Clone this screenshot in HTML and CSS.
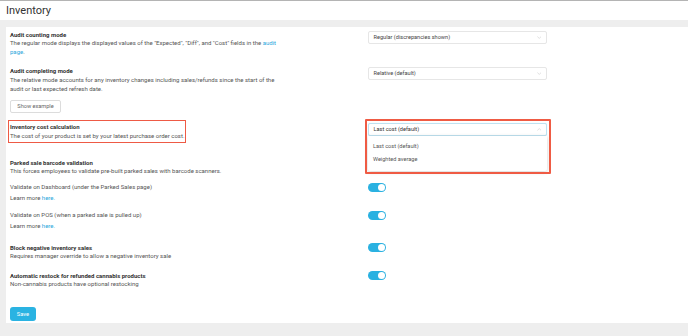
FILE: index.html
```html
<!DOCTYPE html>
<html>
<head>
<meta charset="utf-8">
<link rel="stylesheet" href="styles.css">
</head>
<body>
<header class="topbar"><h1 class="page-title">Inventory</h1></header>
<main class="main">
  <section class="card">
    <div class="row">
      <div class="info">
        <div class="title">Audit counting mode</div>
        <div class="desc">The regular mode displays the displayed values of the "Expected", "Diff", and "Cost" fields in the <a class="link">audit page</a>.</div>
      </div>
      <div class="control">
        <div class="select"><span>Regular (discrepancies shown)</span><svg class="chev" viewBox="0 0 6 4"><polyline points="0.5,0.8 3,3.2 5.5,0.8"/></svg></div>
      </div>
    </div>

    <div class="row gap">
      <div class="info">
        <div class="title">Audit completing mode</div>
        <div class="desc">The relative mode accounts for any inventory changes including sales/refunds since the start of the audit or last expected refresh date.</div>
        <button class="btn-outline">Show example</button>
      </div>
      <div class="control">
        <div class="select s2"><span>Relative (default)</span><svg class="chev" viewBox="0 0 6 4"><polyline points="0.5,0.8 3,3.2 5.5,0.8"/></svg></div>
      </div>
    </div>

    <div class="row gap">
      <div class="info">
        <div class="mark">
          <div class="title">Inventory cost calculation</div>
          <div class="desc">The cost of your product is set by your latest purchase order cost.</div>
        </div>
      </div>
      <div class="control open">
        <div class="select focus"><span>Last cost (default)</span><svg class="chev" viewBox="0 0 6 4"><polyline points="0.5,3.2 3,0.8 5.5,3.2"/></svg></div>
        <ul class="menu">
          <li>Last cost (default)</li>
          <li>Weighted average</li>
        </ul>
        <div class="mark-box"></div>
      </div>
    </div>

    <div class="row gap-lg">
      <div class="info">
        <div class="title">Parked sale barcode validation</div>
        <div class="desc">This forces employees to validate pre-built parked sales with barcode scanners.</div>
      </div>
    </div>

    <div class="row sub">
      <div class="info">
        <div class="desc">Validate on Dashboard (under the Parked Sales page)</div>
        <div class="desc more">Learn more <a class="link">here.</a></div>
      </div>
      <div class="control"><span class="toggle"></span></div>
    </div>

    <div class="row sub2">
      <div class="info">
        <div class="desc">Validate on POS (when a parked sale is pulled up)</div>
        <div class="desc more">Learn more <a class="link">here.</a></div>
      </div>
      <div class="control"><span class="toggle"></span></div>
    </div>

    <div class="row gap-md">
      <div class="info">
        <div class="title">Block negative inventory sales</div>
        <div class="desc">Requires manager override to allow a negative inventory sale</div>
      </div>
      <div class="control"><span class="toggle"></span></div>
    </div>

    <div class="row gap">
      <div class="info">
        <div class="title">Automatic restock for refunded cannabis products</div>
        <div class="desc">Non-cannabis products have optional restocking</div>
      </div>
      <div class="control"><span class="toggle"></span></div>
    </div>

    <button class="btn-save">Save</button>
  </section>
</main>
</body>
</html>
```

FILE: styles.css
```css
* { box-sizing: border-box; }
html, body { margin: 0; padding: 0; }
body {
  background: #eeeeee;
  font-family: Roboto, "Liberation Sans", sans-serif;
  color: #555;
  width: 688px;
  height: 336px;
  overflow: hidden;
}
.topbar {
  background: #fff;
  border-top: 1px solid #b4b4b4;
  height: 20px;
  padding-left: 6px;
}
.page-title {
  margin: 0;
  font-size: 11px;
  line-height: 19px;
  font-weight: 400;
  color: #333;
}
.main {
  padding: 7px 0 0 6px;
}
.card {
  background: #fff;
  height: 296px;
  padding: 2.5px 0 0 4px;
}
.row {
  display: flex;
  align-items: flex-start;
}
.row.gap { margin-top: 9.5px; }
.row.gap-lg { margin-top: 15.6px; }
.row.gap-md { margin-top: 11.8px; }
.row.sub { margin-top: 6.6px; }
.row.sub2 { margin-top: 8.2px; }
.info {
  width: 358px;
  flex: none;
}
.title {
  font-size: 6px;
  line-height: 9.7px;
  font-weight: 700;
  color: #333;
}
.desc {
  font-size: 6px;
  line-height: 8.7px;
  color: #555;
  width: 272px;
}
.desc.more { margin-top: 2.6px; }
.link { color: #2aa7dc; text-decoration: none; }
.control {
  width: 179px;
  flex: none;
  position: relative;
}
.select {
  margin-top: 1.5px;
  height: 12.5px;
  border: 1px solid #e6e6e6;
  border-radius: 2px;
  display: flex;
  align-items: center;
  justify-content: space-between;
  padding: 0 5px 0 4.5px;
  font-size: 5.6px;
  color: #444;
  background: #fff;
}
.select.s2 { margin-top: 1px; }
.select.focus {
  margin-top: 0.8px;
  border-color: #bfe2f1;
  box-shadow: 0 0 1px rgba(42, 167, 220, 0.25);
  color: #333;
}
.chev {
  width: 4.5px;
  height: 3px;
  fill: none;
  stroke: #bbb;
  stroke-width: 0.6;
}
.menu {
  position: absolute;
  left: 0;
  right: 0;
  top: 13.3px;
  margin: 0;
  padding: 4.5px 0 4.5px;
  list-style: none;
  background: #fff;
  box-shadow: 0 1px 4px rgba(0, 0, 0, 0.18);
  border-radius: 0 0 2px 2px;
  z-index: 2;
}
.menu li {
  font-size: 5.6px;
  line-height: 13px;
  padding-left: 5px;
  color: #555;
}
.mark-box {
  position: absolute;
  left: -3.5px;
  right: -3.5px;
  top: -3.8px;
  height: 55.5px;
  border: 2px solid #ef5b44;
  border-radius: 1px;
  z-index: 3;
}
.mark {
  display: inline-block;
  outline: 1.5px solid #ee5a45;
  outline-offset: 1px;
}
.mark .desc { width: auto; }
.btn-outline {
  display: block;
  margin-top: 6.7px;
  width: 51px;
  height: 13px;
  border: 1px solid #dcdcdc;
  border-radius: 2px;
  background: #fff;
  color: #666;
  font-family: inherit;
  font-size: 5.6px;
  padding: 0;
}
.toggle {
  display: block;
  position: relative;
  width: 18px;
  height: 9.5px;
  border-radius: 5px;
  background: #2ab1e1;
}
.toggle::after {
  content: "";
  position: absolute;
  right: 1px;
  top: 1px;
  width: 7.5px;
  height: 7.5px;
  border-radius: 50%;
  background: #fff;
}
.btn-save {
  display: block;
  margin-top: 18px;
  width: 26px;
  height: 13.5px;
  border: none;
  border-radius: 3px;
  background: #2ab3e2;
  color: #fff;
  font-family: inherit;
  font-size: 5.8px;
  padding: 0;
}
```
